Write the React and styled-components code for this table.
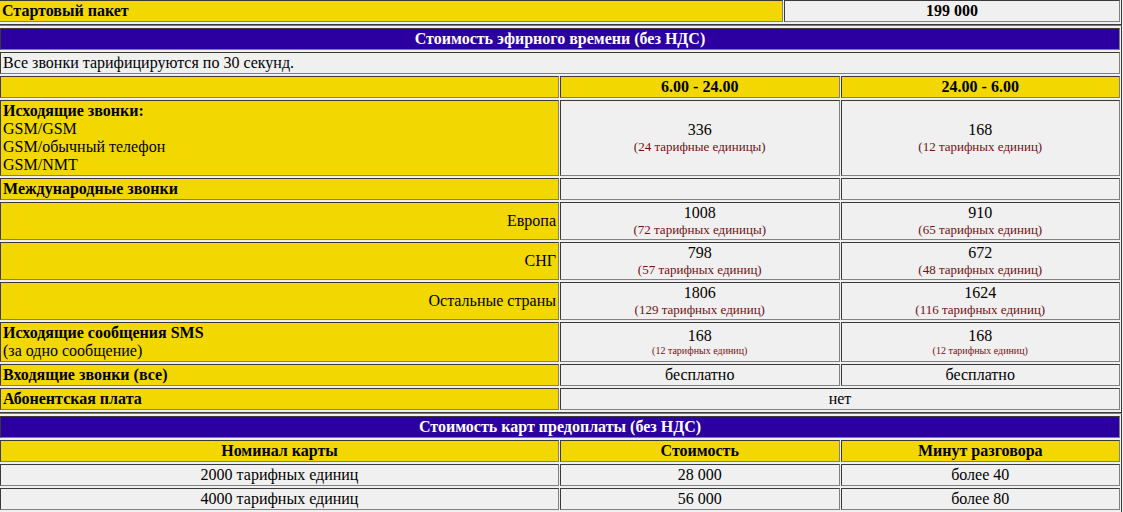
import React from "react";
import styled, { createGlobalStyle } from "styled-components";

const GlobalStyle = createGlobalStyle`
  html, body {
    margin: 0;
    padding: 0;
    overflow: hidden;
    background: #f0f0f0;
  }
  body {
    font-family: "Liberation Serif", "Times New Roman", serif;
    font-size: 16px;
    line-height: 18px;
    color: #000;
  }
`;

const tones = {
  yellow: "#f2d800",
  blue: "#2c00a0",
  plain: "#f0f0f0",
};

const Sheet = styled.div`
  width: 1125px;
  margin: -3px 0 0 -3px;
`;

const Grid = styled.table`
  width: ${(p) => (p.$inset ? "1124px" : "1125px")};
  margin-left: ${(p) => (p.$inset ? "1px" : "0")};
  table-layout: fixed;
  border-collapse: separate;
  border-spacing: 1px 2px;
  border: 1px solid;
  border-color: #808080 #3a3a3a #3a3a3a #808080;
`;

const Col = styled.col`
  width: ${(p) => p.$w};
`;

const Cell = styled.td`
  padding: 1px 2px;
  border: 1px solid;
  border-color: #3a3a3a #808080 #808080 #3a3a3a;
  background: ${(p) => tones[p.$tone || "plain"]};
  color: ${(p) => (p.$tone === "blue" ? "#fff" : "#000")};
  font-weight: ${(p) => (p.$bold ? 700 : 400)};
  text-align: ${(p) => p.$align || "left"};
  vertical-align: middle;
`;

const Strong = styled.b`
  font-weight: 700;
`;

const Aside = styled.span`
  line-height: 17px;
`;

const Note = styled.div`
  color: #701010;
  font-size: ${(p) => (p.$tiny ? "10px" : "13px")};
  line-height: ${(p) => (p.$tiny ? "12px" : "16px")};
`;

const Price = ({ value, note, tiny }) => (
  <>
    <div>{value}</div>
    <Note $tiny={tiny}>{note}</Note>
  </>
);

const ThreeCols = () => (
  <colgroup>
    <Col $w="50%" />
    <Col $w="25%" />
    <Col $w="25%" />
  </colgroup>
);

const zones = [
  { name: "Европа", day: ["1008", "(72 тарифных единицы)"], night: ["910", "(65 тарифных единиц)"] },
  { name: "СНГ", day: ["798", "(57 тарифных единиц)"], night: ["672", "(48 тарифных единиц)"] },
  { name: "Остальные страны", day: ["1806", "(129 тарифных единиц)"], night: ["1624", "(116 тарифных единиц)"] },
];

const cards = [
  ["2000 тарифных единиц", "28 000", "более 40"],
  ["4000 тарифных единиц", "56 000", "более 80"],
];

export default function App() {
  return (
    <>
      <GlobalStyle />
      <Sheet>
        <Grid>
          <colgroup>
            <Col $w="70%" />
            <Col $w="30%" />
          </colgroup>
          <tbody>
            <tr>
              <Cell $tone="yellow" $bold>Стартовый пакет</Cell>
              <Cell $bold $align="center">199 000</Cell>
            </tr>
          </tbody>
        </Grid>

        <Grid $inset>
          <ThreeCols />
          <tbody>
            <tr>
              <Cell colSpan={3} $tone="blue" $bold $align="center">
                Стоимость эфирного времени (без НДС)
              </Cell>
            </tr>
            <tr>
              <Cell colSpan={3}>Все звонки тарифицируются по 30 секунд.</Cell>
            </tr>
            <tr>
              <Cell $tone="yellow" />
              <Cell $tone="yellow" $bold $align="center">6.00 - 24.00</Cell>
              <Cell $tone="yellow" $bold $align="center">24.00 - 6.00</Cell>
            </tr>
            <tr>
              <Cell $tone="yellow">
                <Strong>Исходящие звонки:</Strong>
                <br />
                GSM/GSM
                <br />
                GSM/обычный телефон
                <br />
                GSM/NMT
              </Cell>
              <Cell $align="center">
                <Price value="336" note="(24 тарифные единицы)" />
              </Cell>
              <Cell $align="center">
                <Price value="168" note="(12 тарифных единиц)" />
              </Cell>
            </tr>
            <tr>
              <Cell $tone="yellow" $bold>Международные звонки</Cell>
              <Cell />
              <Cell />
            </tr>
            {zones.map((z) => (
              <tr key={z.name}>
                <Cell $tone="yellow" $align="right">{z.name}</Cell>
                <Cell $align="center">
                  <Price value={z.day[0]} note={z.day[1]} />
                </Cell>
                <Cell $align="center">
                  <Price value={z.night[0]} note={z.night[1]} />
                </Cell>
              </tr>
            ))}
            <tr>
              <Cell $tone="yellow">
                <Strong>Исходящие сообщения SMS</Strong>
                <br />
                <Aside>(за одно сообщение)</Aside>
              </Cell>
              <Cell $align="center">
                <Price value="168" note="(12 тарифных единиц)" tiny />
              </Cell>
              <Cell $align="center">
                <Price value="168" note="(12 тарифных единиц)" tiny />
              </Cell>
            </tr>
            <tr>
              <Cell $tone="yellow" $bold>Входящие звонки (все)</Cell>
              <Cell $align="center">бесплатно</Cell>
              <Cell $align="center">бесплатно</Cell>
            </tr>
            <tr>
              <Cell $tone="yellow" $bold>Абонентская плата</Cell>
              <Cell colSpan={2} $align="center">нет</Cell>
            </tr>
          </tbody>
        </Grid>

        <Grid $inset>
          <ThreeCols />
          <tbody>
            <tr>
              <Cell colSpan={3} $tone="blue" $bold $align="center">
                Стоимость карт предоплаты (без НДС)
              </Cell>
            </tr>
            <tr>
              <Cell $tone="yellow" $bold $align="center">Номинал карты</Cell>
              <Cell $tone="yellow" $bold $align="center">Стоимость</Cell>
              <Cell $tone="yellow" $bold $align="center">Минут разговора</Cell>
            </tr>
            {cards.map((row) => (
              <tr key={row[0]}>
                {row.map((v) => (
                  <Cell key={v} $align="center">{v}</Cell>
                ))}
              </tr>
            ))}
          </tbody>
        </Grid>
      </Sheet>
    </>
  );
}
